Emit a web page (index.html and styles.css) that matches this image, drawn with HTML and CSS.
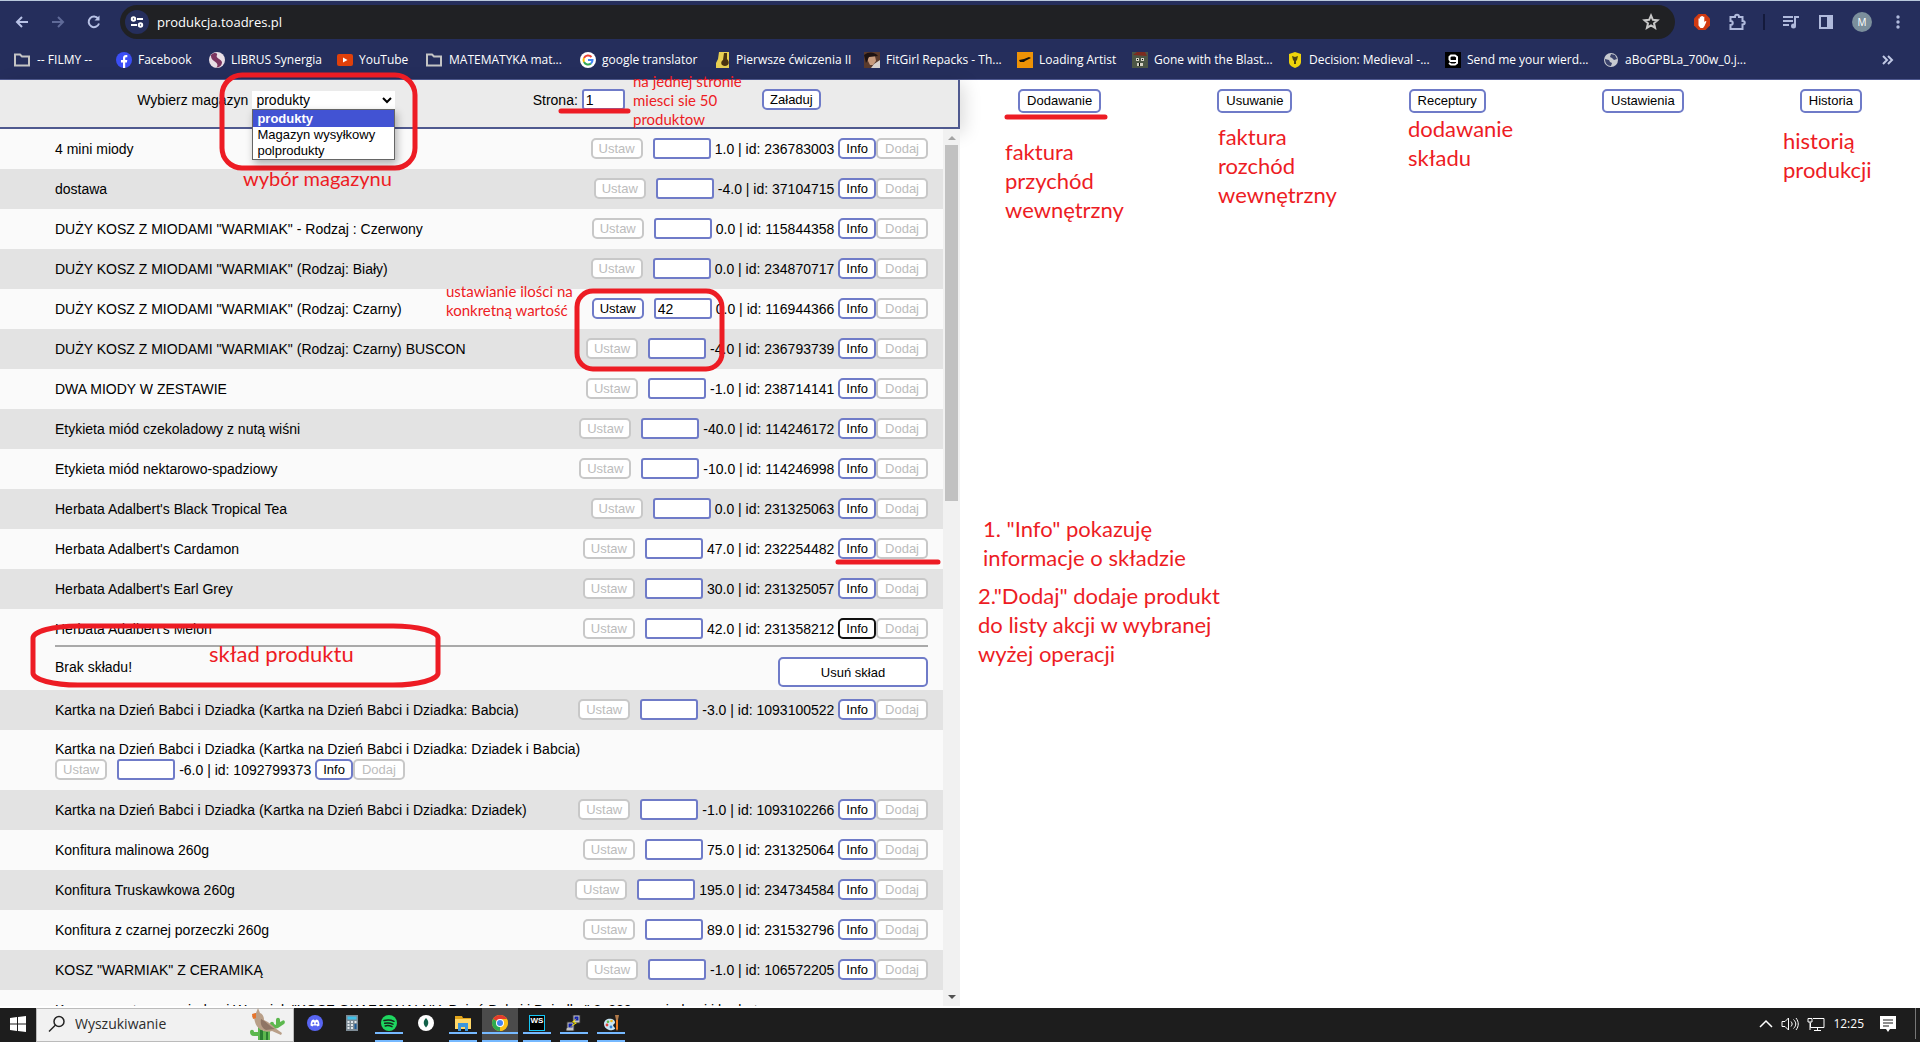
FILE: index.html
```html
<!DOCTYPE html>
<html lang="pl">
<head>
<meta charset="utf-8">
<title>produkcja.toadres.pl</title>
<link rel="stylesheet" href="styles.css">
</head>
<body>
<header class="browser">
  <div class="toolbar">
    <div class="nav-icons">
      <svg width="16" height="16" viewBox="0 0 16 16" fill="none" stroke="#b8c2e6" stroke-width="2"><path d="M14 8H3M8 3L3 8l5 5"/></svg>
      <svg width="16" height="16" viewBox="0 0 16 16" fill="none" stroke="#5f6a98" stroke-width="2"><path d="M2 8h11M8 3l5 5-5 5"/></svg>
      <svg width="16" height="16" viewBox="0 0 16 16" fill="none" stroke="#b8c2e6" stroke-width="2"><path d="M13 9.5A5.3 5.3 0 1 1 12.200 4.600"/><path d="M13.500 1.500v5H8.500z" fill="#b8c2e6" stroke="none"/></svg>
    </div>
    <div class="omnibox">
      <span class="site-info"><svg width="14" height="14" viewBox="0 0 14 14" fill="none" stroke="#fff" stroke-width="2"><circle cx="3.500" cy="4" r="1.700"/><path d="M7 4h6M1 10h6"/><circle cx="10.500" cy="10" r="1.700"/></svg></span>
      <input class="address" type="text" value="produkcja.toadres.pl" aria-label="Adres">
      <svg width="18" height="18" viewBox="0 0 18 18" fill="none" stroke="#c8c8c8" stroke-width="2"><path d="M9 2.500l1.900 4.300 4.600.4-3.500 3.100 1.100 4.600L9 12.500l-4.100 2.400L6 10.300 2.500 7.200l4.600-.4z"/></svg>
    </div>
    <div class="tools">
      <svg width="18" height="18" viewBox="0 0 18 18"><path d="M5.500 1h7L17 5.500v7L12.500 17h-7L1 12.500v-7z" fill="#d03a12"/><path d="M5.500 9V5.500h1.300V3.800h1.500V3h1.500v.8h1.500v1.700V9l1-1 1.200.5-2 4.500-1.500 2H7.500l-2-2.500z" fill="#fff"/></svg>
      <svg width="18" height="18" viewBox="0 0 18 18" fill="none" stroke="#b0badc" stroke-width="2"><path d="M2.500 4H7c0-3 4-3 4 0h3.500v4c3 0 3 3.500 0 3.500V16h-12v-4c3 0 3-4 0-4z"/></svg>
      <span class="tool-line"></span>
      <svg width="18" height="18" viewBox="0 0 18 18" fill="none" stroke="#b0badc" stroke-width="2"><path d="M1 4h10M1 8h10M1 12h6M13 13V4h4"/><circle cx="11.500" cy="13" r="1.500" fill="#b0badc"/></svg>
      <svg width="18" height="18" viewBox="0 0 18 18"><path d="M3 3h12v12H3z" fill="none" stroke="#b0badc" stroke-width="2"/><path d="M10 3h5v12h-5z" fill="#b0badc"/></svg>
      <span class="avatar">M</span>
      <svg width="18" height="18" viewBox="0 0 18 18" fill="#b0badc"><circle cx="9" cy="4" r="1.700"/><circle cx="9" cy="9" r="1.700"/><circle cx="9" cy="14" r="1.700"/></svg>
    </div>
  </div>
  <nav class="bookmarks" aria-label="Zakładki">
    <a href="#"><svg width="18" height="16" viewBox="0 0 18 16" fill="none" stroke="#c4c4c4" stroke-width="2"><path d="M2 13.500V2.500h5l2 2h7v9z"/></svg>-- FILMY --</a>
    <a href="#"><svg width="16" height="16" viewBox="0 0 16 16"><circle cx="8" cy="8" r="8" fill="#3b4ef5"/><path d="M7 16v-5.500H5V8h2V6c0-2 1.200-3 3-3h1.300v2.200h-1C9.400 5.200 9.200 5.700 9.200 6.300V8h2.100l-.4 2.500H9.200V16z" fill="#fff"/></svg>Facebook</a>
    <a href="#"><svg width="16" height="16" viewBox="0 0 16 16"><circle cx="8" cy="8" r="8" fill="#e9dfe6"/><path d="M2 3c3-3 7-2 6 0-2 3 4 4 5 7 0 4-3 5-6 6 3-3 1-5-2-7S2 5 2 3z" fill="#7c3560"/></svg>LIBRUS Synergia</a>
    <a href="#"><svg width="16" height="16" viewBox="0 0 16 16"><rect y="2" width="16" height="12" rx="2" fill="#e0400a"/><path d="M6 5.500v5L10.500 8z" fill="#fff"/></svg>YouTube</a>
    <a href="#"><svg width="18" height="16" viewBox="0 0 18 16" fill="none" stroke="#c4c4c4" stroke-width="2"><path d="M2 13.500V2.500h5l2 2h7v9z"/></svg>MATEMATYKA mat...</a>
    <a href="#"><svg width="16" height="16" viewBox="0 0 16 16"><circle cx="8" cy="8" r="8" fill="#fff"/><g fill="none" stroke-width="2"><path d="M11.500 5A4.600 4.600 0 0 0 4 6" stroke="#ea4335"/><path d="M4 6a4.600 4.600 0 0 0 0 4" stroke="#fbbc05"/><path d="M4 10a4.600 4.600 0 0 0 7 1.500" stroke="#34a853"/><path d="M11 11.500A4.500 4.500 0 0 0 12.500 8H8" stroke="#4285f4"/></g></svg>google translator</a>
    <a href="#"><svg width="14" height="16" viewBox="0 0 14 16"><path d="M3 0h10v16H0v-5l2-4z" fill="#e8cf52"/><path d="M8 1h3v6c3 3 2 7-2 7s-5-4-2-6z" fill="#4a3310"/></svg>Pierwsze ćwiczenia II</a>
    <a href="#"><svg width="16" height="16" viewBox="0 0 16 16"><path d="M0 0h16v16H0z" fill="#5a3a2c"/><path d="M4 4h7l1 5-3 4H6L4 9z" fill="#c79a7c"/><path d="M0 3c5-4 11-3 14 1l-9 1-3 6z" fill="#1d1212"/><path d="M10 12l6-4v8H7z" fill="#d6d0cd"/></svg>FitGirl Repacks - Th...</a>
    <a href="#"><svg width="16" height="16" viewBox="0 0 16 16"><path d="M0 0h16v16H0z" fill="#ee9206"/><path d="M2 8l5-1 5-2 2 1-6 3-1 1H3z" fill="#14100a"/></svg>Loading Artist</a>
    <a href="#"><svg width="16" height="16" viewBox="0 0 16 16"><path d="M0 0h16v16H0z" fill="#4c5646"/><path d="M1 3l4-3h8l2 4z" fill="#7c2b20"/><path d="M4 6h3v3H4zM9 6h3v3H9zM5 11h6v3H5z" fill="#d4d2c4"/><path d="M5 7h1v1H5zM10 7h1v1h-1zM7 11h1v3H7z" fill="#000"/></svg>Gone with the Blast...</a>
    <a href="#"><svg width="16" height="16" viewBox="0 0 16 16"><path d="M8 0l6 2v8c0 3-3 5-6 6-3-1-6-3-6-6V2z" fill="#eed40c"/><path d="M5 4l3 1 3-1-1 4-1 1v3H7V9L6 8z" fill="#4b4310"/></svg>Decision: Medieval -...</a>
    <a href="#"><svg width="16" height="16" viewBox="0 0 16 16"><path d="M0 0h16v16H0z" fill="#000"/><path d="M11.500 9H5.500L4.500 7.500V5l1.500-1.500h4L12 5v6l-2 1.500H6L4 11" fill="none" stroke="#fff" stroke-width="2"/></svg>Send me your wierd...</a>
    <a href="#"><svg width="16" height="16" viewBox="0 0 16 16"><circle cx="8" cy="8" r="7" fill="#c7cad0"/><path d="M2 7l4 1 1 2 2 1-1 3c-4 0-6-3-6-7zM8 2l4 1 2 4-3 1-2-2-2-1z" fill="#3a426b"/></svg>aBoGPBLa_700w_0.j...</a>
    <button class="more" type="button" aria-label="Więcej zakładek"><svg width="12" height="12" viewBox="0 0 12 12" fill="none" stroke="#c0c8e4" stroke-width="2"><path d="M1 2l4 4-4 4M6 2l4 4-4 4"/></svg></button>
  </nav>
</header>

<main class="page">
  <section class="stock">
    <form class="filters">
      <div class="field">
        <label for="store">Wybierz magazyn</label>
        <div class="picker">
          <select id="store"><option>produkty</option><option>Magazyn wysyłkowy</option><option>polprodukty</option></select>
          <ul class="picker-list"><li class="chosen">produkty</li><li>Magazyn wysyłkowy</li><li>polprodukty</li></ul>
        </div>
      </div>
      <div class="field"><label for="pageno">Strona:</label><input id="pageno" class="page-no" type="text" value="1"></div>
      <button class="btn" type="button">Załaduj</button>
    </form>
    <div class="list-box">
      <ul class="list">
        <li class="row"><span>4 mini miody</span><div class="controls"><button class="btn" disabled>Ustaw</button><input class="qty" aria-label="Ilość"><span class="stat">1.0 | id: 236783003</span><button class="btn">Info</button><button class="btn" disabled>Dodaj</button></div></li>
        <li class="row"><span>dostawa</span><div class="controls"><button class="btn" disabled>Ustaw</button><input class="qty" aria-label="Ilość"><span class="stat">-4.0 | id: 37104715</span><button class="btn">Info</button><button class="btn" disabled>Dodaj</button></div></li>
        <li class="row"><span>DUŻY KOSZ Z MIODAMI "WARMIAK" - Rodzaj : Czerwony</span><div class="controls"><button class="btn" disabled>Ustaw</button><input class="qty" aria-label="Ilość"><span class="stat">0.0 | id: 115844358</span><button class="btn">Info</button><button class="btn" disabled>Dodaj</button></div></li>
        <li class="row"><span>DUŻY KOSZ Z MIODAMI "WARMIAK" (Rodzaj: Biały)</span><div class="controls"><button class="btn" disabled>Ustaw</button><input class="qty" aria-label="Ilość"><span class="stat">0.0 | id: 234870717</span><button class="btn">Info</button><button class="btn" disabled>Dodaj</button></div></li>
        <li class="row"><span>DUŻY KOSZ Z MIODAMI "WARMIAK" (Rodzaj: Czarny)</span><div class="controls"><button class="btn">Ustaw</button><input class="qty" aria-label="Ilość" value="42"><span class="stat">0.0 | id: 116944366</span><button class="btn">Info</button><button class="btn" disabled>Dodaj</button></div></li>
        <li class="row"><span>DUŻY KOSZ Z MIODAMI "WARMIAK" (Rodzaj: Czarny) BUSCON</span><div class="controls"><button class="btn" disabled>Ustaw</button><input class="qty" aria-label="Ilość"><span class="stat">-4.0 | id: 236793739</span><button class="btn">Info</button><button class="btn" disabled>Dodaj</button></div></li>
        <li class="row"><span>DWA MIODY W ZESTAWIE</span><div class="controls"><button class="btn" disabled>Ustaw</button><input class="qty" aria-label="Ilość"><span class="stat">-1.0 | id: 238714141</span><button class="btn">Info</button><button class="btn" disabled>Dodaj</button></div></li>
        <li class="row"><span>Etykieta miód czekoladowy z nutą wiśni</span><div class="controls"><button class="btn" disabled>Ustaw</button><input class="qty" aria-label="Ilość"><span class="stat">-40.0 | id: 114246172</span><button class="btn">Info</button><button class="btn" disabled>Dodaj</button></div></li>
        <li class="row"><span>Etykieta miód nektarowo-spadziowy</span><div class="controls"><button class="btn" disabled>Ustaw</button><input class="qty" aria-label="Ilość"><span class="stat">-10.0 | id: 114246998</span><button class="btn">Info</button><button class="btn" disabled>Dodaj</button></div></li>
        <li class="row"><span>Herbata Adalbert's Black Tropical Tea</span><div class="controls"><button class="btn" disabled>Ustaw</button><input class="qty" aria-label="Ilość"><span class="stat">0.0 | id: 231325063</span><button class="btn">Info</button><button class="btn" disabled>Dodaj</button></div></li>
        <li class="row"><span>Herbata Adalbert's Cardamon</span><div class="controls"><button class="btn" disabled>Ustaw</button><input class="qty" aria-label="Ilość"><span class="stat">47.0 | id: 232254482</span><button class="btn">Info</button><button class="btn" disabled>Dodaj</button></div></li>
        <li class="row"><span>Herbata Adalbert's Earl Grey</span><div class="controls"><button class="btn" disabled>Ustaw</button><input class="qty" aria-label="Ilość"><span class="stat">30.0 | id: 231325057</span><button class="btn">Info</button><button class="btn" disabled>Dodaj</button></div></li>
        <li class="row open"><span>Herbata Adalbert's Melon</span><div class="controls"><button class="btn" disabled>Ustaw</button><input class="qty" aria-label="Ilość"><span class="stat">42.0 | id: 231358212</span><button class="btn focused">Info</button><button class="btn" disabled>Dodaj</button></div>
          <div class="detail"><span>Brak składu!</span><button class="btn wide">Usuń skład</button></div></li>
        <li class="row"><span>Kartka na Dzień Babci i Dziadka (Kartka na Dzień Babci i Dziadka: Babcia)</span><div class="controls"><button class="btn" disabled>Ustaw</button><input class="qty" aria-label="Ilość"><span class="stat">-3.0 | id: 1093100522</span><button class="btn">Info</button><button class="btn" disabled>Dodaj</button></div></li>
        <li class="row"><span>Kartka na Dzień Babci i Dziadka (Kartka na Dzień Babci i Dziadka: Dziadek i Babcia)</span><div class="controls"><button class="btn" disabled>Ustaw</button><input class="qty" aria-label="Ilość"><span class="stat">-6.0 | id: 1092799373</span><button class="btn">Info</button><button class="btn" disabled>Dodaj</button></div></li>
        <li class="row"><span>Kartka na Dzień Babci i Dziadka (Kartka na Dzień Babci i Dziadka: Dziadek)</span><div class="controls"><button class="btn" disabled>Ustaw</button><input class="qty" aria-label="Ilość"><span class="stat">-1.0 | id: 1093102266</span><button class="btn">Info</button><button class="btn" disabled>Dodaj</button></div></li>
        <li class="row"><span>Konfitura malinowa 260g</span><div class="controls"><button class="btn" disabled>Ustaw</button><input class="qty" aria-label="Ilość"><span class="stat">75.0 | id: 231325064</span><button class="btn">Info</button><button class="btn" disabled>Dodaj</button></div></li>
        <li class="row"><span>Konfitura Truskawkowa 260g</span><div class="controls"><button class="btn" disabled>Ustaw</button><input class="qty" aria-label="Ilość"><span class="stat">195.0 | id: 234734584</span><button class="btn">Info</button><button class="btn" disabled>Dodaj</button></div></li>
        <li class="row"><span>Konfitura z czarnej porzeczki 260g</span><div class="controls"><button class="btn" disabled>Ustaw</button><input class="qty" aria-label="Ilość"><span class="stat">89.0 | id: 231532796</span><button class="btn">Info</button><button class="btn" disabled>Dodaj</button></div></li>
        <li class="row"><span>KOSZ "WARMIAK" Z CERAMIKĄ</span><div class="controls"><button class="btn" disabled>Ustaw</button><input class="qty" aria-label="Ilość"><span class="stat">-1.0 | id: 106572205</span><button class="btn">Info</button><button class="btn" disabled>Dodaj</button></div></li>
        <li class="row"><span>Kosz prezentowy z miodami Warmiak "KOSZ OKAZJONALNY: Dzień Babci i Dziadka" 8x220g z miodami i herbatą</span></li>
      </ul>
      <div class="scrollbar" aria-hidden="true"><span class="arrow up"></span><span class="thumb"></span><span class="arrow down"></span></div>
    </div>
  </section>
  <nav class="actions" aria-label="Operacje">
    <button class="btn tall">Dodawanie</button>
    <button class="btn tall">Usuwanie</button>
    <button class="btn tall">Receptury</button>
    <button class="btn tall">Ustawienia</button>
    <button class="btn tall">Historia</button>
  </nav>
</main>

<footer class="taskbar">
  <button class="start" aria-label="Start"><svg width="16" height="16" viewBox="0 0 16 16" fill="#fff"><path d="M0 2l7-1v6.500H0zM8 1l8-1v7.500H8zM0 8.500h7V15l-7-1zM8 8.500h8V16l-8-1z"/></svg></button>
  <div class="search">
    <svg width="18" height="18" viewBox="0 0 18 18" fill="none" stroke="#222" stroke-width="1.500"><circle cx="11" cy="6.500" r="5"/><path d="M7.500 10L1 16.500"/></svg>
    <input type="text" value="Wyszukiwanie" aria-label="Wyszukiwanie">
    <svg width="38" height="32" viewBox="0 0 38 32"><path d="M1 24c0-3 4-3 4 0h4v-4c0-3 4-3 4 0v3h8v9H9v-4H5c-3 0-4-2-4-4zM21 16c0-3 4-3 4 0l2 1v-5c0-3 4-3 4 0v2l2-1c2-2 4 1 2 3l-6 4-8 2z" fill="#5cb84e"/><path d="M11 22h3v10h-3zM17 24h2v8h-2z" fill="#2b7d32"/><path d="M9 0l2 5c3 1 4 4 4 7 5 2 8 5 11 8l7 5-1 2-9-4c-6 2-15-1-17-9L5 10 3 9l1-3 3-1z" fill="#b99f88"/><path d="M12 11c5 2 8 7 14 10l-9 1c-4-2-6-6-5-11z" fill="#8f7565"/><path d="M3 6l4-1v5l-3 1z" fill="#e8742b"/></svg>
  </div>
  <div class="apps">
    <button class="app" aria-label="Discord"><svg width="16" height="16" viewBox="0 0 16 16"><circle cx="8" cy="8" r="8" fill="#5865f2"/><path d="M3.500 10.500c0-3 1-5 1.500-5.500l2-.5.3.7h1.400l.3-.7 2 .5c.5.500 1.500 2.500 1.500 5.500l-2 1-.7-1H6.200l-.7 1z" fill="#fff"/><circle cx="6.300" cy="8.300" r="1" fill="#5865f2"/><circle cx="9.700" cy="8.300" r="1" fill="#5865f2"/></svg></button>
    <button class="app" aria-label="Kalkulator"><svg width="16" height="16" viewBox="0 0 16 16"><path d="M2 0h12v16H2z" fill="#7d8b95"/><path d="M3.500 1.500h9v3h-9z" fill="#3fc1ea"/><path d="M3.500 6h2v2h-2zM7 6h2v2H7zM3.500 9h2v2h-2zM7 9h2v2H7zM3.500 12h2v2h-2zM7 12h2v2H7zM10.500 6h2v2h-2z" fill="#e2e8ec"/><path d="M10.500 9h2v5h-2z" fill="#1d5d9b"/></svg></button>
    <button class="app running" aria-label="Spotify"><svg width="16" height="16" viewBox="0 0 16 16"><circle cx="8" cy="8" r="8" fill="#1ed760"/><path d="M3 5.500c3.500-1 7-.7 10 .8M3.700 8.300c3-.8 5.800-.4 8.300.9M4.200 10.900c2.500-.6 4.800-.3 6.800.8" fill="none" stroke="#16251b" stroke-width="1.500" stroke-linecap="round"/></svg></button>
    <button class="app" aria-label="MongoDB Compass"><svg width="16" height="16" viewBox="0 0 16 16"><circle cx="8" cy="8" r="8" fill="#fff"/><path d="M8 3c3 3 3 6.500 0 9.500C5 9.500 5 6 8 3z" fill="#116149"/></svg></button>
    <button class="app running" aria-label="Eksplorator plików"><svg width="16" height="16" viewBox="0 0 16 16"><path d="M0 1h7l1 2h8v11H0z" fill="#e2a51b"/><path d="M0 4h16v10H0z" fill="#ffd767"/><path d="M3 16V8h10v8h-3v-4H6v4z" fill="#3a96dd"/></svg></button>
    <button class="app running active" aria-label="Chrome"><svg width="16" height="16" viewBox="0 0 16 16"><circle cx="8" cy="8" r="8" fill="#fbc116"/><path d="M8 8L1.100 4A8 8 0 0 1 14.900 4z" fill="#e33b2e"/><path d="M1.100 4L8 8v8A8 8 0 0 1 1.100 4z" fill="#2da94f"/><path d="M8 8V4h6.900C17 8 15 15 8 16l3.500-6z" fill="#fbc116"/><circle cx="8" cy="8" r="4" fill="#fff"/><circle cx="8" cy="8" r="3" fill="#4285f4"/></svg></button>
    <button class="app running" aria-label="WebStorm"><span class="ws">WS</span></button>
    <button class="app running" aria-label="PuTTY"><svg width="16" height="16" viewBox="0 0 16 16"><path d="M7 0h7v8H7zM1 7h7v9H0v-3h1z" fill="#c4c4c4" stroke="#333" stroke-width="1"/><path d="M8.500 1.500h4v4h-4zM2.500 8.500h4v4h-4z" fill="#1020b0"/><path d="M11 3L6 7l3 1-6 5 8-5-3-1z" fill="#ffed00"/></svg></button>
    <button class="app running" aria-label="Paint"><svg width="16" height="16" viewBox="0 0 16 16"><path d="M1 9c0-5 5-6 8-5 3 1 4 4 2 5s0 3 1 4-3 3-6 2-5-3-5-6z" fill="#c8e5f5"/><circle cx="4" cy="10" r="1.400" fill="#e0443a"/><circle cx="5" cy="6.800" r="1.300" fill="#5cba47"/><circle cx="8.500" cy="6" r="1.300" fill="#f3b81f"/><circle cx="8" cy="12" r="1.400" fill="#3a86d8"/><path d="M12 0h4l-1 5h-2z" fill="#b07a4a"/><path d="M13 5h2v9l-1 2-1-2z" fill="#ef7d22"/></svg></button>
  </div>
  <div class="tray">
    <svg width="14" height="16" viewBox="0 0 14 16" fill="none" stroke="#fff"><path d="M1 11l6-6 6 6" stroke-width="1.500"/></svg>
    <svg width="18" height="16" viewBox="0 0 18 16" fill="none" stroke="#fff"><path d="M1 5.500h3l3.500-3.500v12L4 10.500H1zM10 5.500c1.500 2 1.500 3 0 5M12.500 3.500c3 3 3 6 0 9M15 2c3 4 3 8 0 12"/></svg>
    <svg width="18" height="16" viewBox="0 0 18 16" fill="none" stroke="#fff"><path d="M6 2.500h11v9H3.500V7M10.500 11.500v3M7 14.500h7M1 2.500h4V6H1zM3 6v8"/></svg>
    <time>12:25</time>
    <svg width="18" height="18" viewBox="0 0 18 18"><path d="M1 1h16v13h-6l-2 3-2-3H1z" fill="#fff"/><path d="M4 5h10M4 8h10M4 11h6" stroke="#1d1d1d"/></svg>
    <span class="desk-edge"></span>
  </div>
</footer>

<div class="notes">
  <svg class="marks" fill="none" stroke="#ed1c24" stroke-width="5" stroke-linecap="round">
    <rect x="222" y="75" width="193" height="93" rx="20"/>
    <rect x="577" y="291" width="145" height="78" rx="16"/>
    <rect x="33" y="626" width="405" height="59" rx="45" ry="12"/>
    <path d="M561 111h67M1007 117h98M838 562h100"/>
  </svg>
  <p class="note small n-page">na jednej stronie<br>miesci sie 50<br>produktow</p>
  <p class="note n-store">wybór magazynu</p>
  <p class="note small n-qty">ustawianie ilości na<br>konkretną wartość</p>
  <p class="note large n-detail">skład produktu</p>
  <p class="note large n-add">faktura<br>przychód<br>wewnętrzny</p>
  <p class="note large n-remove">faktura<br>rozchód<br>wewnętrzny</p>
  <p class="note large n-recipe">dodawanie<br>składu</p>
  <p class="note large n-history">historią<br>produkcji</p>
  <p class="note large n-info">1. "Info" pokazuję<br>informacje o składzie</p>
  <p class="note large n-dodaj">2."Dodaj" dodaje produkt<br>do listy akcji w wybranej<br>wyżej operacji</p>
</div>
</body>
</html>
```
FILE: styles.css
```css
* { box-sizing: border-box; }
body {
  margin: 0;
  height: 100vh;
  position: relative;
  display: flex;
  flex-direction: column;
  overflow: hidden;
  background: #fff;
  color: #000;
  font: 14px/20px "Liberation Sans", Arial, sans-serif;
}
button, input, select { font: inherit; color: inherit; }
ul { list-style: none; margin: 0; padding: 0; }
svg { flex: none; display: block; }

/* Browser chrome */
.browser {
  background: #252e5c;
  color: #fff;
  font-family: "Open Sans", "Noto Sans", sans-serif;
  border-top: 1px solid #b9c9dc;
  border-bottom: 1px solid #4f598f;
}
.toolbar { display: flex; align-items: center; height: 42px; padding: 0 13px 0 14px; }
.nav-icons { display: flex; gap: 20px; width: 106px; }
.omnibox {
  flex: 1;
  display: flex;
  align-items: center;
  gap: 8px;
  height: 34px;
  padding: 0 15px 0 5px;
  border-radius: 17px;
  background: #202124;
}
.site-info { display: grid; place-items: center; width: 24px; height: 24px; border-radius: 50%; background: #252e5c; }
.address { flex: 1; border: 0; padding: 0; background: none; font-size: 13px; }
.tools { display: flex; align-items: center; gap: 17px; padding-left: 18px; }
.tool-line { width: 2px; height: 16px; background: #141a3c; }
.avatar {
  width: 20px; height: 20px; border-radius: 50%;
  background: #7b8f9c; font-size: 10px; text-align: center;
}
.bookmarks {
  display: grid;
  grid-template-columns: 103px 93px 128px 88px 155px 136px 148px 153px 115px 155px 158px 158px 1fr auto;
  align-items: center;
  height: 36px;
  padding: 0 26px 3px 13px;
  font-size: 12px;
}
.bookmarks a { display: flex; align-items: center; gap: 6px; color: #fff; text-decoration: none; white-space: nowrap; }
.more { border: 0; padding: 0; background: none; }

/* Application */
.page { flex: 1; min-height: 0; display: grid; grid-template-columns: 1fr 1fr; }
.stock { display: flex; flex-direction: column; min-height: 0; padding-bottom: 2px; }
.filters {
  display: flex;
  justify-content: space-evenly;
  align-items: flex-start;
  height: 49px;
  padding-top: 9px;
  background: #ebebeb;
  border-right: 2px solid #4f598f;
  border-bottom: 2px solid #4f598f;
  box-shadow: 4px 4px 18px rgba(0, 0, 0, .15);
}
.field { display: flex; align-items: center; gap: 4px; height: 21px; }
.picker { position: relative; width: 143px; }
.picker select { display: block; width: 100%; height: 18px; padding: 0; border: 0; background: #fff; font-size: 14px; }
.picker-list {
  position: absolute; top: 18px; left: 0; z-index: 2; width: 100%;
  border: 1px solid #666; background: #fff; font-size: 13px; line-height: 16px;
  box-shadow: 2px 4px 8px rgba(0, 0, 0, .3);
}
.picker-list li { padding: 0 4px; white-space: nowrap; }
.picker-list .chosen { background: #4253d3; color: #fff; font-weight: bold; line-height: 17px; }
.page-no, .qty { border: 2px solid #6f7bc8; border-radius: 3px; height: 21px; padding: 0 2px; background: #fff; }
.page-no { width: 43px; }
.qty { width: 58px; margin: 0 4px 0 10px; }
.btn {
  height: 21px;
  padding: 0 6px;
  border: 2px solid #6f7bc8;
  border-radius: 5px;
  background: #fff;
  color: #000;
  font-size: 13px;
  line-height: 17px;
}
.controls .btn:last-child { padding: 0 7px; }
.btn:disabled { border-color: #c8c8c8; color: #bcbcbc; }
.btn.focused { border-color: #111; }
.btn.tall { height: 24px; padding: 0 7px; line-height: 20px; }
.btn.wide { width: 150px; height: 30px; }

.list-box { flex: 1; min-height: 0; display: flex; }
.list { flex: 1; overflow: hidden; }
.row {
  display: flex;
  flex-wrap: wrap;
  justify-content: space-between;
  align-items: center;
  min-height: 40px;
  padding: 9px 15px 10px 55px;
  background: #fafafa;
}
.row:nth-child(even) { background: #e3e3e3; }
.row.open { padding-bottom: 3px; }
.controls { display: flex; align-items: center; }
.stat { margin-right: 4px; }
.detail {
  flex: 0 0 100%;
  display: flex;
  justify-content: space-between;
  margin-top: 6px;
  padding-top: 10px;
  border-top: 2px solid #a9a9a9;
}
.scrollbar { width: 17px; display: flex; flex-direction: column; align-items: center; background: #f1f1f1; }
.thumb { width: 13px; height: 356px; margin: 5px 0 auto; background: #c1c1c1; }
.arrow { border: 4px solid transparent; }
.up { margin-top: 3px; border-bottom-color: #a3a3a3; }
.down { margin-bottom: 3px; border-top-color: #505050; }

.actions { display: flex; justify-content: space-around; align-items: flex-start; padding-top: 9px; }

/* Taskbar */
.taskbar { display: flex; align-items: stretch; height: 34px; background: #1d1d1d; color: #fff; font-family: "Open Sans", sans-serif; }
.taskbar button { border: 0; padding: 0; background: none; }
.taskbar .start { width: 36px; padding-bottom: 3px; display: grid; place-items: center; }
.search {
  width: 258px; display: flex; align-items: center; gap: 9px;
  padding: 0 6px 2px 11px; background: #f1f1f1; color: #2c2c2c; border: 1px solid #bbb;
}
.search input { flex: 1; min-width: 0; border: 0; padding: 0; background: none; font-size: 14px; }
.apps { display: flex; gap: 1px; flex: 1; padding-left: 3px; }
.app { position: relative; width: 36px; display: flex; justify-content: center; align-items: flex-start; }
.taskbar .app { padding-top: 7px; }
.app.running::after {
  content: ""; position: absolute; left: 4px; right: 4px; bottom: 0; height: 6px;
  border: solid #76b9ff; border-width: 2px 0;
}
.taskbar .app.active { background: #4b4b4b; }
.app.active::after { left: 0; right: 0; }
.ws { width: 16px; height: 16px; border: 1px solid #16c6f3; background: #000; font: bold 8px/10px "Liberation Sans", sans-serif; }
.tray { display: flex; align-items: center; gap: 8px; padding: 0 4px 3px 0; font-size: 12px; }
.tray time { margin-right: 7px; }
.desk-edge { align-self: stretch; width: 1px; margin-left: 10px; background: #777; }

/* Annotations laid over the screen */
.notes { position: absolute; inset: 0; pointer-events: none; color: #ed1c24; }
.marks { position: absolute; width: 100%; height: 100%; }
.note { position: absolute; margin: 0; white-space: nowrap; font: 20px/29px Lato, "Open Sans", sans-serif; }
.note.small { font-size: 15px; line-height: 19px; }
.note.large { font-size: 22px; }
.n-page { left: 633px; top: 72px; }
.n-store { left: 243px; top: 164px; }
.n-qty { left: 446px; top: 282px; }
.n-detail { left: 209px; top: 639px; }
.n-add { left: 1005px; top: 137px; }
.n-remove { left: 1218px; top: 122px; }
.n-recipe { left: 1408px; top: 114px; }
.n-history { left: 1783px; top: 126px; }
.n-info { left: 983px; top: 514px; }
.n-dodaj { left: 978px; top: 581px; }
```
